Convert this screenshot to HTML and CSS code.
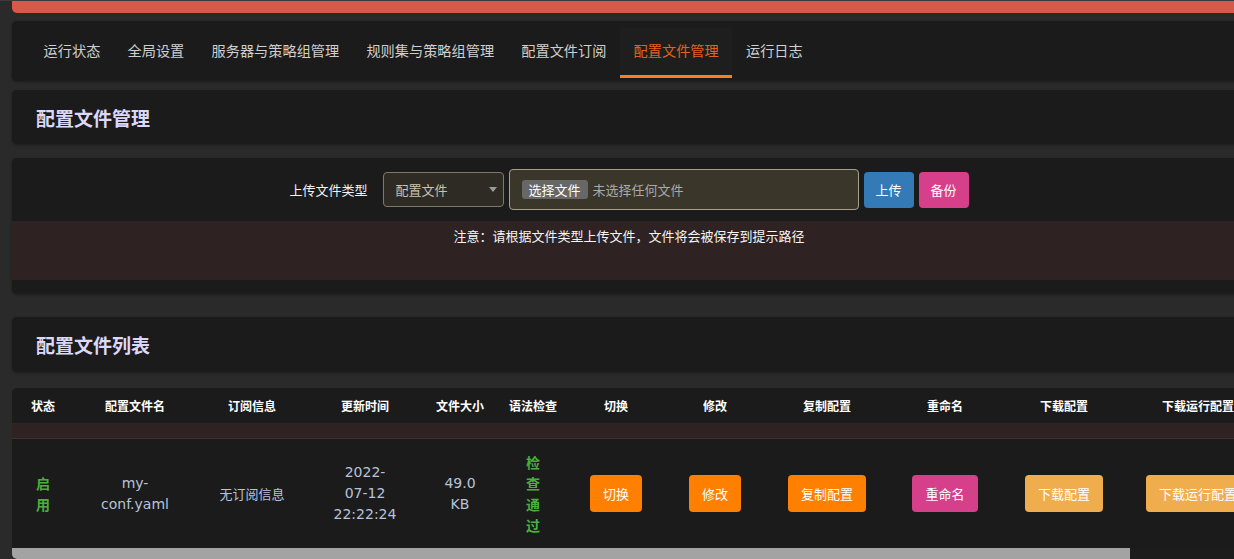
FILE: index.html
```html
<!DOCTYPE html>
<html lang="zh-CN">
<head>
<meta charset="utf-8">
<title>配置文件管理</title>
<link rel="stylesheet" href="styles.css">
</head>
<body>
<div class="page">
  <div class="alert-bar"></div>

  <nav class="card nav">
    <a class="tab">运行状态</a>
    <a class="tab">全局设置</a>
    <a class="tab">服务器与策略组管理</a>
    <a class="tab">规则集与策略组管理</a>
    <a class="tab">配置文件订阅</a>
    <a class="tab active">配置文件管理</a>
    <a class="tab">运行日志</a>
  </nav>

  <div class="card title-card title-first"><h2>配置文件管理</h2></div>

  <div class="card upload-card">
    <div class="upload-row">
      <span class="upload-label">上传文件类型</span>
      <div class="select"><span>配置文件</span><span class="caret"></span></div>
      <div class="file"><span class="file-btn">选择文件</span><span class="file-none">未选择任何文件</span></div>
      <button class="btn btn-primary">上传</button>
      <button class="btn btn-pink">备份</button>
    </div>
    <div class="note">注意：请根据文件类型上传文件，文件将会被保存到提示路径</div>
  </div>

  <div class="card title-card title-second"><h2>配置文件列表</h2></div>

  <div class="table-card">
    <div class="table-viewport">
      <table class="grid">
        <thead>
          <tr>
            <th><div class="w-state">状态</div></th>
            <th><div class="w-name">配置文件名</div></th>
            <th><div class="w-sub">订阅信息</div></th>
            <th><div class="w-time">更新时间</div></th>
            <th><div class="w-size">文件大小</div></th>
            <th><div class="w-check">语法检查</div></th>
            <th><div class="w-switch">切换</div></th>
            <th><div class="w-edit">修改</div></th>
            <th><div class="w-copy">复制配置</div></th>
            <th><div class="w-rename">重命名</div></th>
            <th><div class="w-dl">下载配置</div></th>
            <th><div class="w-dlrun">下载运行配置</div></th>
            <th><div class="w-del">删除</div></th>
          </tr>
        </thead>
        <tbody>
          <tr class="spacer"><td colspan="13"></td></tr>
          <tr class="row">
            <td class="ok c-state">启用</td>
            <td class="c-name">my-conf.yaml</td>
            <td class="sub">无订阅信息</td>
            <td class="c-time">2022-07-12 22:22:24</td>
            <td class="c-size">49.0 KB</td>
            <td class="ok c-check">检查通过</td>
            <td><span class="btn btn-orange">切换</span></td>
            <td><span class="btn btn-orange">修改</span></td>
            <td><span class="btn btn-orange">复制配置</span></td>
            <td><span class="btn btn-pink">重命名</span></td>
            <td><span class="btn btn-warn">下载配置</span></td>
            <td><span class="btn btn-warn">下载运行配置</span></td>
            <td><span class="btn btn-danger">删除</span></td>
          </tr>
        </tbody>
      </table>
    </div>
    <div class="hscroll"><div class="hscroll-thumb"></div></div>
  </div>
</div>
</body>
</html>
```

FILE: styles.css
```css
html, body {
  margin: 0;
  padding: 0;
}

body {
  background: #2a2a2a;
  border-top: 1px solid #3c3c3c;
  overflow: hidden;
  font-family: "Noto Sans CJK SC", "Noto Sans", sans-serif;
  color: #d0d0d0;
}

.page {
  width: 1234px;
  padding-left: 12px;
}

.alert-bar {
  height: 12px;
  background: #d9574b;
  border-radius: 0 0 0 5px;
}

.card {
  background: #1b1b1b;
  border-radius: 5px;
  box-shadow: 0 1px 3px rgba(0, 0, 0, 0.35);
}

/* nav */
.nav {
  margin-top: 8px;
  padding: 7px 18px 3px;
  display: flex;
}

.tab {
  display: block;
  height: 47px;
  line-height: 44px;
  padding: 0 13.6px;
  font-size: 14.2px;
  color: #cfcfcf;
  border-bottom: 3px solid transparent;
  white-space: nowrap;
}

.tab.active {
  color: #e5611f;
  border-bottom-color: #f5821f;
  background: #1e1e1e;
}

/* title cards */
.title-card {
  height: 54px;
  display: flex;
  align-items: center;
  padding-left: 24px;
}

.title-first {
  margin-top: 9px;
}

.title-second {
  margin-top: 23px;
  height: 55px;
}

.title-card h2 {
  margin: 0;
  font-size: 19px;
  font-weight: bold;
  color: #dcd8fa;
}

/* upload */
.upload-card {
  margin-top: 14px;
  padding: 11px 0 14px;
}

.upload-row {
  display: flex;
  justify-content: center;
  align-items: center;
  height: 41px;
}

.upload-label {
  font-size: 13px;
  color: #f2f2f2;
  margin-right: 15px;
}

.select {
  box-sizing: border-box;
  width: 121px;
  height: 35px;
  border: 1px solid #7f7966;
  border-radius: 4px;
  background: #2e2b24;
  display: flex;
  align-items: center;
  justify-content: space-between;
  padding: 0 6px 0 12px;
  font-size: 13px;
  color: #c9c2ae;
}

.caret {
  width: 0;
  height: 0;
  border-top: 5px solid #9a9a9a;
  border-left: 4px solid transparent;
  border-right: 4px solid transparent;
}

.file {
  box-sizing: border-box;
  width: 350px;
  height: 41px;
  margin-left: 5px;
  border: 1px solid #a6a08a;
  border-radius: 4px;
  background: #3a362a;
  display: flex;
  align-items: center;
  padding-left: 12px;
  font-size: 13px;
}

.file-btn {
  height: 19px;
  line-height: 19px;
  padding: 0 7px;
  background: #676767;
  border-radius: 3px;
  color: #fff;
}

.file-none {
  margin-left: 5px;
  color: #a9a9a9;
}

button.btn {
  border: 0;
  margin-left: 5px;
  width: 50px;
  height: 36px;
  line-height: 36px;
  padding: 0;
  font-family: inherit;
}

.note {
  margin-top: 11px;
  height: 59px;
  box-sizing: border-box;
  padding-top: 6px;
  background: #2e2222;
  text-align: center;
  font-size: 13px;
  line-height: 18px;
  color: #f5f5f5;
}

/* buttons */
.btn {
  display: inline-block;
  height: 37px;
  line-height: 37px;
  padding: 0 13px;
  border-radius: 4px;
  font-family: "Noto Sans CJK SC", sans-serif;
  font-size: 13px;
  color: #fff;
  white-space: nowrap;
}

.btn-primary { background: #337ab7; }
.btn-pink { background: #d6408b; }
.btn-orange { background: #ff7f00; }
.btn-warn { background: #f0ad4e; }
.btn-danger { background: #d9534f; }

/* table */
.table-card {
  margin-top: 16px;
  background: #1b1b1b;
  border-radius: 5px;
  overflow: hidden;
}

.table-viewport {
  overflow: hidden;
}

.hscroll {
  height: 11px;
  background: #1c1c1c;
}

.hscroll-thumb {
  width: 1118px;
  height: 100%;
  background: #a3a3a3;
}

.grid {
  border-collapse: collapse;
  table-layout: auto;
}

.grid th {
  height: 35px;
  padding: 0 11px;
  white-space: nowrap;
  font-size: 12px;
  font-weight: bold;
  color: #ffffff;
  text-align: center;
}

.w-state { width: 40px; }
.w-name { width: 100px; }
.w-sub { width: 90px; }
.w-time { width: 92px; }
.w-size { width: 54px; }
.w-check { width: 48px; }
.w-switch { width: 74px; }
.w-edit { width: 80px; }
.w-copy { width: 100px; }
.w-rename { width: 92px; }
.w-dl { width: 102px; }
.w-dlrun { width: 122px; }
.w-del { width: 60px; }

.spacer td {
  height: 15px;
  padding: 0;
  background: #2e2222;
  border-bottom: 1px solid #3f302e;
}

.row td {
  height: 85px;
  padding: 12px 0;
  text-align: center;
  vertical-align: middle;
  font-family: "DejaVu Sans", "Noto Sans CJK SC", sans-serif;
  font-size: 14px;
  line-height: 21px;
  color: #b9c2dc;
}

.row td.c-state { padding: 12px 20px; }
.row td.c-name { padding: 12px 20px; }
.row td.c-time { padding: 12px 25.5px; }
.row td.c-size { padding: 12px 20px; }
.row td.c-check { padding: 12px 22px; }

.row td.ok {
  font-family: "Noto Sans CJK SC", sans-serif;
  font-weight: bold;
  color: #4cae3c;
}

.row td.sub {
  font-family: "Noto Sans CJK SC", sans-serif;
  font-size: 13px;
  white-space: nowrap;
}
```
